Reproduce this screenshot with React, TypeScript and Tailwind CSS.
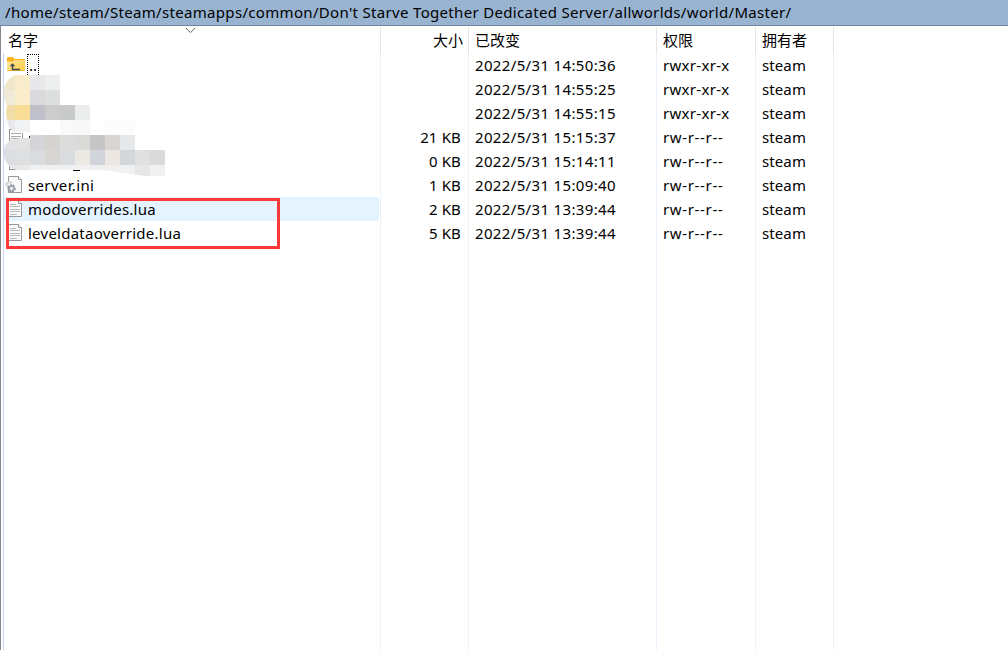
import React from "react";

type Kind = "up" | "folder" | "hidden" | "ini" | "text";
type Row = { name: string; kind: Kind; size: string; date: string; rights: string; selected?: boolean };

const rows: Row[] = [
  { name: "..", kind: "up", size: "", date: "2022/5/31 14:50:36", rights: "rwxr-xr-x" },
  { name: "", kind: "hidden", size: "", date: "2022/5/31 14:55:25", rights: "rwxr-xr-x" },
  { name: "", kind: "folder", size: "", date: "2022/5/31 14:55:15", rights: "rwxr-xr-x" },
  { name: "", kind: "text", size: "21 KB", date: "2022/5/31 15:15:37", rights: "rw-r--r--" },
  { name: "", kind: "text", size: "0 KB", date: "2022/5/31 15:14:11", rights: "rw-r--r--" },
  { name: "server.ini", kind: "ini", size: "1 KB", date: "2022/5/31 15:09:40", rights: "rw-r--r--" },
  { name: "modoverrides.lua", kind: "text", size: "2 KB", date: "2022/5/31 13:39:44", rights: "rw-r--r--", selected: true },
  { name: "leveldataoverride.lua", kind: "text", size: "5 KB", date: "2022/5/31 13:39:44", rights: "rw-r--r--" },
];

function Folder({ up }: { up?: boolean }) {
  return (
    <svg width="20" height="18" viewBox="0 0 20 18" className="shrink-0">
      <defs>
        <linearGradient id="fold" x1="0" y1="0" x2="1" y2="1">
          <stop offset="0" stopColor="#ffe9a0" />
          <stop offset="1" stopColor="#ffcb3f" />
        </linearGradient>
      </defs>
      <path d="M1 3.5V2Q1 1 2 1H6.7L8.5 3H18Q19 3 19 4V7H1Z" fill="#fbb117" />
      <path d="M1 5.5H7L9 4H18Q19 4 19 5V14Q19 15 18 15H2Q1 15 1 14Z" fill="url(#fold)" />
      <path d="M1.5 14.5H18.5" stroke="#f3b932" strokeWidth="1" />
      {up && (
        <>
          <path d="M6.5 8V13.5H14" fill="none" stroke="#3d4650" strokeWidth="1.4" />
          <path d="M3.8 10.2L6.5 7.2L9.2 10.2Z" fill="#3d4650" />
        </>
      )}
    </svg>
  );
}

function Doc({ gear }: { gear?: boolean }) {
  return (
    <svg width="20" height="20" viewBox="0 0 20 20" overflow="visible" className="shrink-0">
      <path d="M2.5 1.5H12.5L15.5 4.5V17.5H2.5Z" fill="#f9f9f9" stroke="#999" />
      <path d="M12.5 1.5V4.5H15.5" fill="#fff" stroke="#999" />
      {gear ? (
        <>
          <circle cx="3" cy="9.5" r="2.8" fill="#dfe5ea" stroke="#b9c1c8" strokeWidth="1.5" strokeDasharray="1.4 1" />
          <circle cx="3" cy="9.5" r="1" fill="#fff" />
          <circle cx="5.5" cy="13.5" r="3.2" fill="#b3bac2" stroke="#868d95" strokeWidth="1.8" strokeDasharray="1.6 1.1" />
          <circle cx="5.5" cy="13.5" r="1.2" fill="#fff" />
        </>
      ) : (
        <path d="M4 5.5H10M4 7.5H14M4 10.5H14M4 12.5H14M4 15.5H11" stroke="#b8b8b8" />
      )}
    </svg>
  );
}

const mosaic: { y: number; h: number; c: string[] }[] = [
  { y: 75, h: 15, c: ["#f0e7cb", "#f9eccd", "#e8e8ea", "#eeefef"] },
  { y: 90, h: 15, c: ["#f0ead8", "#fbecca", "#dadadc", "#dddede"] },
  { y: 105, h: 15, c: ["#f0dda8", "#f9dc95", "#bfc0c9", "#cbcccb", "#c8caca", "#ebeded"] },
  { y: 120, h: 15, c: ["#e6e8eb", "#f1f2f3", "#ffffff", "#ffffff", "#f9f9f9", "#f8f8f8", "#ffffff", "#fcfcfc", "#fcfcfc"] },
  { y: 135, h: 15, c: ["#e2e2e4", "#e2e2e2", "#d5d5d7", "#d4d3d0", "#dcdcdc", "#dadad8", "#c4c5c4", "#d8d5d2", "#e7e8ea"] },
  { y: 150, h: 15, c: ["#dcdde0", "#dedfe0", "#d9dbde", "#d7d6d4", "#dadcdf", "#ece9e3", "#d1d5db", "#ece7e2", "#d3d7da", "#e0e0e0", "#dadada"] },
  { y: 165, h: 12, c: ["#e6e7e8", "#e8e8e8", "#f0f1f2", "#f0f0f0", "#f0f1f2", "#f1f1f1", "#eeeff1", "#f2f0ef", "#f0f1f1", "#e5e8e7", "#f1f1f1"] },
];

function Mosaic() {
  return (
    <svg width="180" height="180" viewBox="0 0 180 180" className="pointer-events-none absolute left-0 top-0" shapeRendering="crispEdges">
      <path d="M9.5 141V129.5H15M9.5 166V169.5H17" fill="none" stroke="#8f8f8f" />
      <path d="M11 133.5H21M11 136.5H21M11 138.5H21" stroke="#aaa" />
      <clipPath id="brush">
        <path d="M15 75H180V176H145L124 173L103 170H17L13 169L9 166L5 160L3.5 153L5 145L11 140L20 138H30V132H14L8 126L7 120L6 113L7 106L4 98L3.5 90L6 83L10 78Z" />
      </clipPath>
      <g clipPath="url(#brush)">
        {mosaic.map((r) =>
          r.c.map((c, i) => <rect key={`${r.y}-${i}`} x={i * 15} y={r.y} width="15" height={r.h} fill={c} />)
        )}
      </g>
      <path d="M11 133.5H21M11 136.5H21" stroke="#aaa" />
      <path d="M22.5 133V138" stroke="#999" />
      <path d="M24 132H30V138H24Z" fill="#fff" />
      <path d="M29 136H30V138H29Z" fill="#222" />
      <path d="M73 170H80V171H73Z" fill="#000" />
    </svg>
  );
}

const cols = "grid grid-cols-[377px_88px_188px_99px_78px_1fr]";

export default function App() {
  return (
    <div className="relative flex h-[650px] w-[1008px] flex-col overflow-hidden bg-white font-['Noto_Sans','Noto_Sans_CJK_SC',sans-serif] text-[15px] text-black">
      <div className="flex h-[26px] shrink-0 items-center whitespace-pre border-b border-[#6f87a3] bg-[#99b4d1] pl-[5px] tracking-[0.32px]">
        /home/steam/Steam/steamapps/common/Don't Starve Together Dedicated Server/allworlds/world/Master/
      </div>
      <div className="relative flex flex-1 flex-col border-l border-[#828790] pl-[3px]">
        <svg width="12" height="8" viewBox="0 0 12 8" className="absolute left-[184px] top-[1px]">
          <path d="M0.8 1L5.5 5.6L10.2 1" fill="none" stroke="#666" strokeWidth="1" />
        </svg>
        <div className={`${cols} h-[27px] shrink-0 pt-px leading-[26px]`}>
          <div className="border-r border-[#e5e5e5] pl-1">名字</div>
          <div className="border-r border-[#e5e5e5] pr-[5px] text-right">大小</div>
          <div className="border-r border-[#e5e5e5] pl-1.5">已改变</div>
          <div className="border-r border-[#e5e5e5] pl-1.5">权限</div>
          <div className="border-r border-[#e5e5e5] pl-1.5">拥有者</div>
        </div>
        <div className="relative -ml-px flex flex-1 flex-col border-l border-[#c5d5f5]">
          {rows.map((r, i) => (
            <div key={i} className={`${cols} relative h-6 shrink-0 leading-6`}>
              <div className="flex">
                <div className={`flex w-[375px] items-center rounded-[2px] pl-[2px] ${r.selected ? "bg-[#e5f3ff]" : ""}`}>
                  {r.kind === "up" && <Folder up />}
                  {r.kind === "folder" && <Folder />}
                  {r.kind === "hidden" && <span className="w-5" />}
                  {r.kind === "ini" && <Doc gear />}
                  {r.kind === "text" && r.name && <Doc />}
                  {i === 0 ? (
                    <span className="ml-px h-[23px] w-3 border border-dotted border-black pl-px leading-[21px]">..</span>
                  ) : (
                    <span className={`ml-[2px] ${r.kind === "ini" ? "tracking-[0.35px]" : "tracking-[0.25px]"}`}>{r.name}</span>
                  )}
                </div>
              </div>
              <div className="pr-2 text-right tracking-[0.15px]">{r.size}</div>
              <div className="pl-1.5 tracking-[0.35px]">{r.date}</div>
              <div className={`pl-1.5 ${r.rights === "rw-r--r--" ? "tracking-[0.65px]" : "tracking-[0.3px]"}`}>{r.rights}</div>
              <div className="pl-1.5 tracking-[0.1px]">steam</div>
            </div>
          ))}
          <div className={`${cols} pointer-events-none absolute inset-0`}>
            <div className="border-r border-[#e9f2fd]" />
            <div className="border-r border-[#e9f2fd]" />
            <div className="border-r border-[#e9f2fd]" />
            <div className="border-r border-[#e9f2fd]" />
            <div className="border-r border-[#e9f2fd]" />
          </div>
        </div>
      </div>
      <Mosaic />
      <div className="pointer-events-none absolute left-[6px] top-[198px] h-[51px] w-[274px] border-[3px] border-[#ff3838]" />
    </div>
  );
}
